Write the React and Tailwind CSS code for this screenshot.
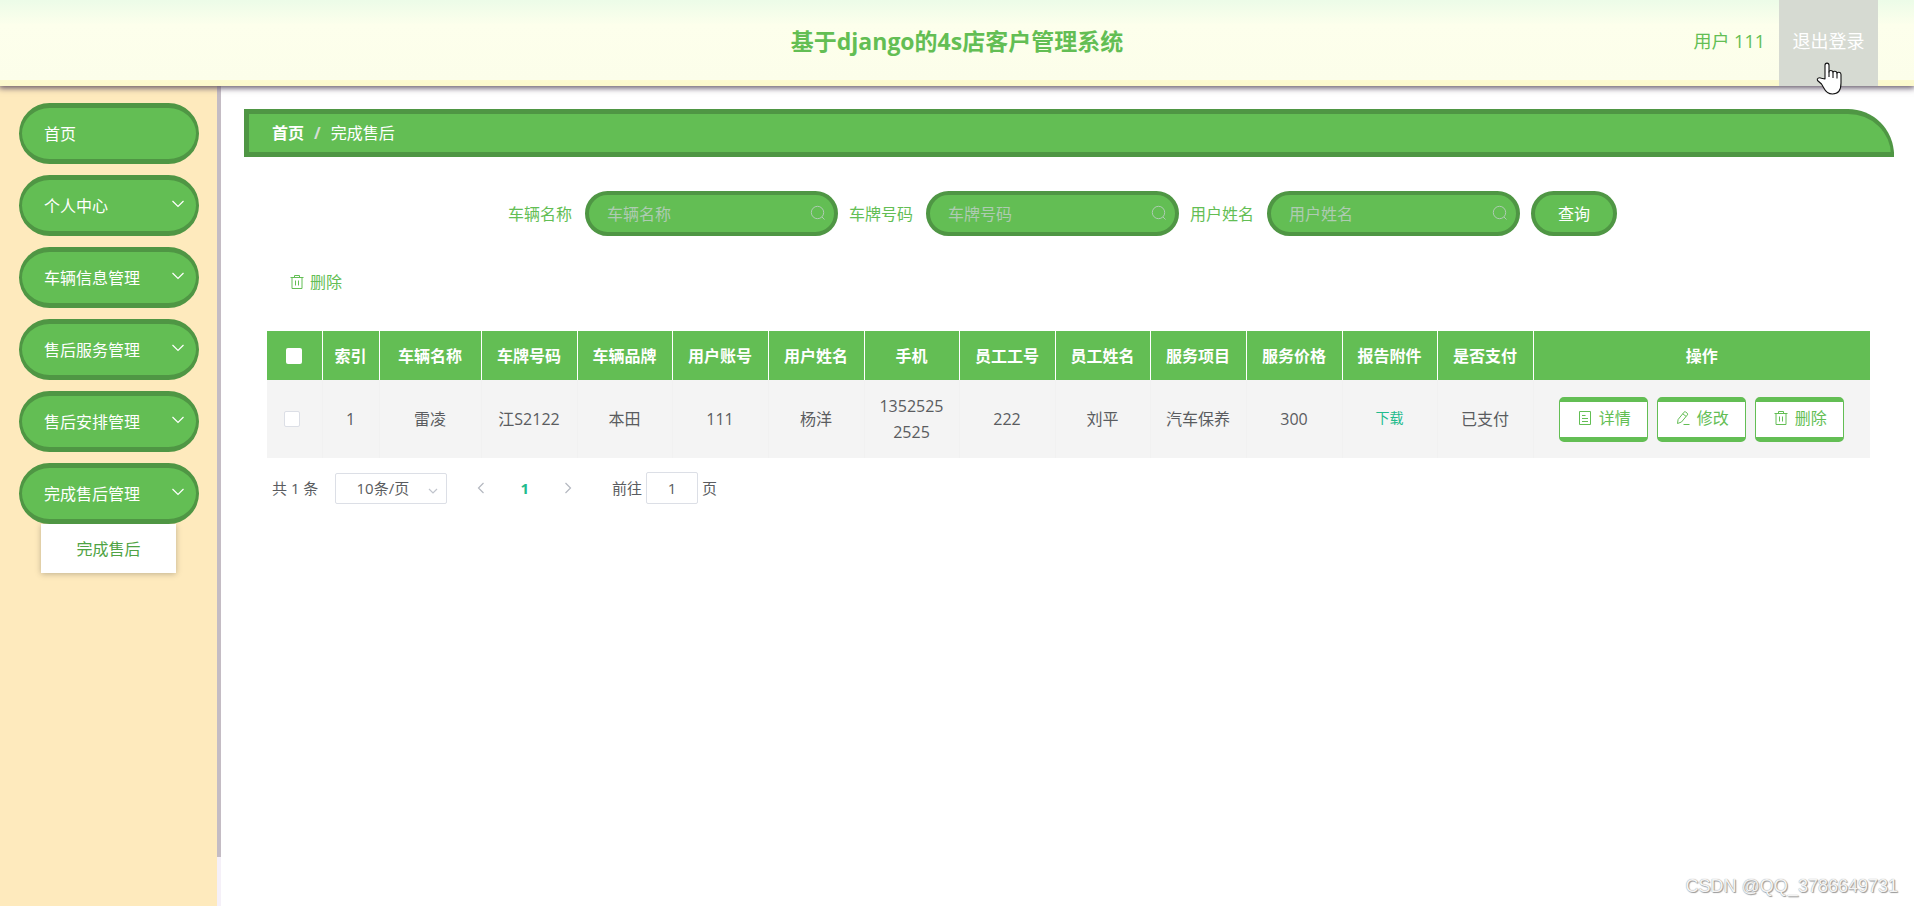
import { useState } from "react";

const menu = ["首页", "个人中心", "车辆信息管理", "售后服务管理", "售后安排管理", "完成售后管理"];

const columns = [
  ["索引", "w-[57px]", "1"],
  ["车辆名称", "w-[102px]", "雷凌"],
  ["车牌号码", "w-24", "江S2122"],
  ["车辆品牌", "w-[95px]", "本田"],
  ["用户账号", "w-24", "111"],
  ["用户姓名", "w-24", "杨洋"],
  ["手机", "w-[95px]", "13525252525"],
  ["员工工号", "w-24", "222"],
  ["员工姓名", "w-[95px]", "刘平"],
  ["服务项目", "w-24", "汽车保养"],
  ["服务价格", "w-24", "300"],
  ["报告附件", "w-[95px]", null],
  ["是否支付", "w-24", "已支付"],
];

const filters = ["车辆名称", "车牌号码", "用户姓名"];

function Icon({ children, className = "size-4" }) {
  return (
    <svg viewBox="0 0 16 16" fill="none" stroke="currentColor" strokeWidth="1" className={className} aria-hidden="true">
      {children}
    </svg>
  );
}

function TrashIcon() {
  return (
    <Icon>
      <path d="M1.5 3.5h13M5.5 3.5v-2h5v2M3 3.5v11h10v-11M6.5 6.5v5M9.5 6.5v5" />
    </Icon>
  );
}

function DocIcon() {
  return (
    <Icon>
      <path d="M2.5 1.5h11v13h-11zM5 5.5h3.5M5 8.5h6M5 11.5h6" />
    </Icon>
  );
}

function EditIcon() {
  return (
    <Icon>
      <path d="M2.5 13.5l.6-4L9 2.2a1.2 1.2 0 0 1 1.7-.2l1.5 1.2a1.2 1.2 0 0 1 .2 1.7L6.5 12zM7.8 3.8l3.3 2.6M8.5 14.5h6" />
    </Icon>
  );
}

function Chevron({ d, className }) {
  return (
    <svg viewBox="0 0 12 12" fill="none" stroke="currentColor" strokeWidth="1.2" className={className} aria-hidden="true">
      <path d={d} />
    </svg>
  );
}

function ActionButton({ icon, children }) {
  return (
    <button className="flex h-[45px] w-[89px] items-center justify-center gap-1.5 rounded-[5px] border-x border-y-[5px] border-[#63be54] bg-white pb-0.5 text-base text-[#63be54]">
      {icon}
      {children}
    </button>
  );
}

function Header() {
  return (
    <header className="relative z-10 grid h-[86px] shrink-0 grid-cols-[1fr_auto_1fr] items-center bg-linear-to-b from-[#ecfce8] via-[#fdffec] via-30% to-[#fcf9cc] shadow-[0_1px_6px_1px_#5f5266]">
      <div className="absolute inset-x-0 top-6 bottom-1.5 bg-linear-to-b from-[#fdffec] to-[#fcfeea]" />
      <h1 className="relative col-start-2 pb-1 text-[23px] font-bold text-[#63be54]">基于django的4s店客户管理系统</h1>
      <div className="relative flex h-full items-center justify-end pr-9 text-lg text-[#63be54]">
        <span className="pr-3.5 pb-1">用户 111</span>
        <a href="#logout" className="relative flex h-full w-[99px] items-center justify-center bg-[#d6dad2] pb-1 text-white">
          退出登录
          <svg viewBox="0 0 26 33" className="absolute top-[62px] left-[37px] z-20 h-[33px] w-[26px]" aria-hidden="true">
            <path
              d="M9 17V3.2C9 .4 13 .4 13 3.2V10c0-2 4-2 4 .6 0-2 4-1.800 4 .8 0-1.800 4-1.600 4 1V21c0 7-3 11-8.500 11-4.500 0-7-2.500-9-6.500l-2-3.500-4-3.500c-1-2 1.500-3.500 4-2.300z"
              fill="white"
              stroke="#111"
              strokeWidth="1.1"
              strokeLinejoin="round"
            />
            <path d="M13 9.500V15M17 10.500V16M21 11.500V16.500" stroke="#111" strokeWidth="1.1" />
          </svg>
        </a>
      </div>
    </header>
  );
}

function Sidebar() {
  return (
    <aside className="flex w-[221px] shrink-0 bg-[#feeabd]">
      <nav className="flex-1 pt-[17px] pl-[19px]">
        <ul className="flex flex-col gap-[11px]">
          {menu.map((label, i) => (
            <li key={label}>
              <button className="flex h-[61px] w-[180px] items-center justify-between rounded-[31px] border-x-[3px] border-y-[5px] border-[#4f9644] bg-[#63be54] pr-3 pl-[22px] text-base text-white">
                {label}
                {i > 0 && <Chevron d="M0.500 3l5.500 5.500L11.500 3" className="mb-1 size-3" />}
              </button>
            </li>
          ))}
        </ul>
        <a
          href="#finished"
          className="ml-[22px] flex h-[49px] w-[135px] items-center justify-center bg-white text-base text-[#4fa344] shadow-[0_1px_6px_rgba(0,0,0,0.25)]"
        >
          完成售后
        </a>
      </nav>
      <div className="w-1 bg-[#f5f0f8]">
        <div className="h-[94%] bg-[#c4bcc4]" />
      </div>
    </aside>
  );
}

function Filters() {
  return (
    <form className="mt-[34px] flex items-center justify-center gap-[11px] pr-3" onSubmit={(e) => e.preventDefault()}>
      {filters.map((name) => (
        <label key={name} className="flex items-center gap-[13px] text-base text-[#63be54]">
          {name}
          <span className="relative block">
            <input
              placeholder={name}
              className="h-[45px] w-[253px] rounded-full border-4 border-[#4f9644] bg-[#63be54] pr-8 pl-[18px] text-base text-white outline-none placeholder:text-[#aecbb2]"
            />
            <Icon className="absolute top-3.5 right-3 size-4 text-[#aecbb2]">
              <circle cx="7.500" cy="7.500" r="6.200" />
              <path d="M12 12l2.500 2.500" />
            </Icon>
          </span>
        </label>
      ))}
      <button className="h-[45px] w-[86px] rounded-full border-4 border-[#4f9644] bg-[#63be54] text-base text-white">查询</button>
    </form>
  );
}

function DataTable() {
  return (
    <table className="w-full table-fixed border-collapse text-center text-base">
      <thead>
        <tr className="h-[49px] bg-[#63be54] text-white">
          <th className="w-[55px] border-r border-white">
            <input type="checkbox" aria-label="全选" className="block mx-auto size-4 appearance-none rounded-xs bg-white" />
          </th>
          {columns.map(([name, width]) => (
            <th key={name} className={`${width} border-r border-white font-bold`}>
              {name}
            </th>
          ))}
          <th className="font-bold">操作</th>
        </tr>
      </thead>
      <tbody>
        <tr className="h-[78px] bg-[#f4f4f4] leading-[26px] text-[#5a5c60]">
          <td className="border-r border-[#f1f1f1] pr-1">
            <input
              type="checkbox"
              aria-label="选择第1行"
              className="block mx-auto size-4 appearance-none rounded-xs border border-[#dcdfe6] bg-white"
            />
          </td>
          {columns.map(([name, , value]) => (
            <td key={name} className="border-r border-[#f1f1f1] px-3 break-all">
              {value ?? (
                <a href="#download" className="block pb-0.5 text-sm leading-6 text-[#22bb8c]">
                  下载
                </a>
              )}
            </td>
          ))}
          <td>
            <div className="flex justify-center gap-[9px]">
              <ActionButton icon={<DocIcon />}>详情</ActionButton>
              <ActionButton icon={<EditIcon />}>修改</ActionButton>
              <ActionButton icon={<TrashIcon />}>删除</ActionButton>
            </div>
          </td>
        </tr>
      </tbody>
    </table>
  );
}

function Pagination() {
  const [page, setPage] = useState("1");
  return (
    <div className="mt-[14px] flex h-8 items-center pl-[5px] text-[15px] text-[#5a5c60]">
      <span>共 1 条</span>
      <span className="relative ml-[17px]">
        <select
          aria-label="每页条数"
          className="block h-[31px] w-28 appearance-none rounded-xs border border-[#dcdfe6] bg-white pr-[17px] text-center [text-align-last:center] outline-none"
        >
          <option>10条/页</option>
        </select>
        <Chevron d="M2 4l4 4 4-4" className="pointer-events-none absolute top-3 right-2 size-3 text-[#c0c4cc]" />
      </span>
      <button aria-label="上一页" className="ml-7 text-[#b4b8c0]">
        <Chevron d="M8.500 1l-5 5 5 5" className="size-3" />
      </button>
      <button className="mx-[33px] font-bold text-[#22bb8c]">1</button>
      <button aria-label="下一页" className="text-[#b4b8c0]">
        <Chevron d="M3.500 1l5 5-5 5" className="size-3" />
      </button>
      <label className="ml-[38px] flex items-center gap-1">
        前往
        <input
          value={page}
          onChange={(e) => setPage(e.target.value)}
          className="h-8 w-[52px] rounded-xs border border-[#dcdfe6] text-center outline-none"
        />
        页
      </label>
    </div>
  );
}

export default function App() {
  return (
    <div className="relative flex min-h-screen flex-col bg-white font-['Open_Sans','Noto_Sans_CJK_SC',sans-serif]">
      <Header />
      <div className="flex flex-1">
        <Sidebar />
        <main className="min-w-0 flex-1 pt-[23px] pr-5 pl-[23px]">
          <nav
            aria-label="面包屑"
            className="flex h-12 items-center gap-2.5 rounded-tr-[46px] border-y-[5px] border-r-[3px] border-l-[5px] border-[#4f9644] bg-[#63be54] pl-[23px] text-base text-white"
          >
            <a href="#home" className="font-bold">首页</a>
            <span className="font-bold text-[#d5ddd5]">/</span>
            <span>完成售后</span>
          </nav>
          <div className="pr-6 pl-[23px]">
            <Filters />
            <button className="mt-[34px] mb-[37px] ml-[22px] flex items-center gap-[5px] text-base text-[#63be54]">
              <TrashIcon />
              删除
            </button>
            <DataTable />
            <Pagination />
          </div>
        </main>
      </div>
      <p className="absolute right-4 bottom-1.5 font-['Liberation_Sans',sans-serif] text-lg text-[#f4f4f4] [text-shadow:0_0_1px_#888,1px_1px_1px_#999]">
        CSDN @QQ_3786649731
      </p>
    </div>
  );
}
